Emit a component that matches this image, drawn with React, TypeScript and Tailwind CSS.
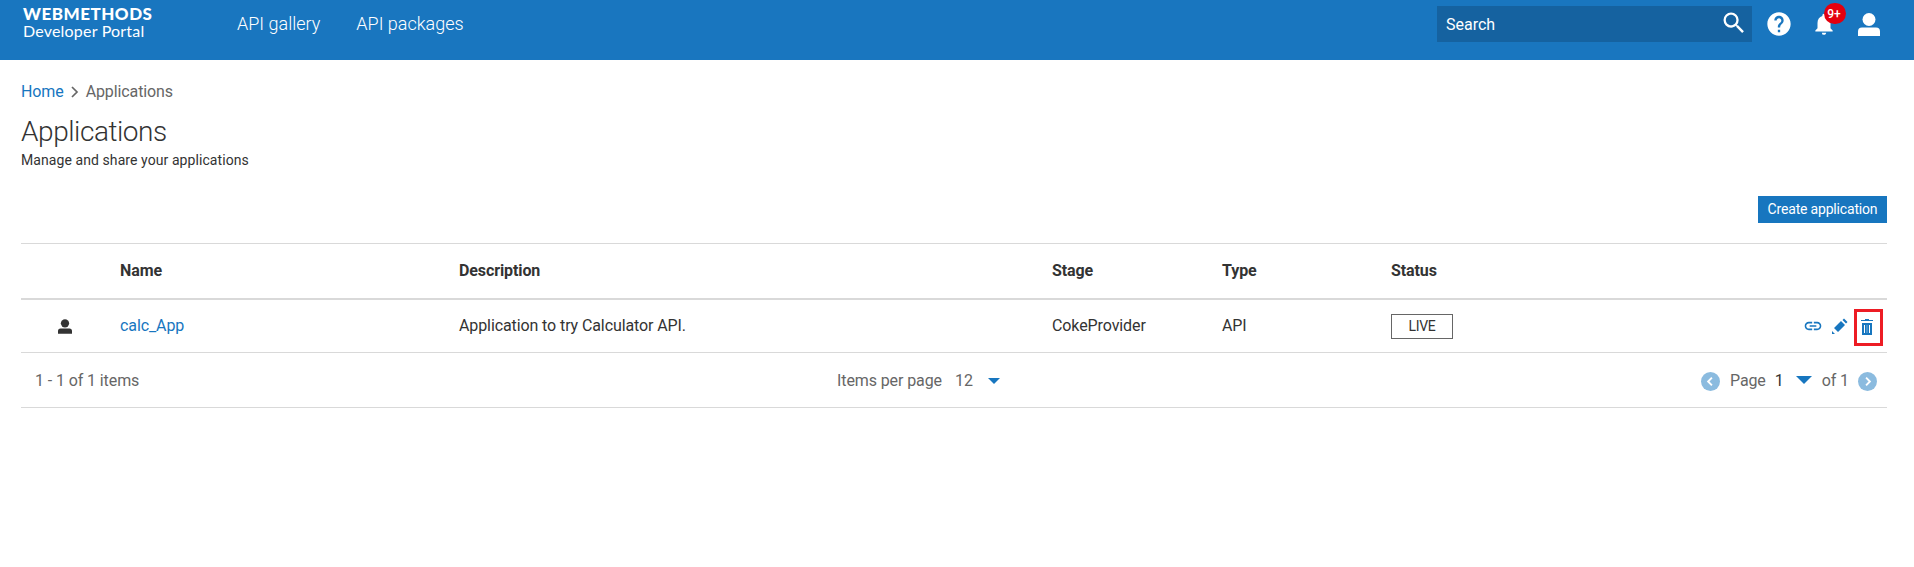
import React from "react";
import { MdSearch, MdHelp, MdNotifications, MdLink } from "react-icons/md";

function Person({ className }: { className: string }) {
  return (
    <svg viewBox="0 0 22 23" className={className} fill="currentColor">
      <circle cx="11" cy="6.5" r="6.5" />
      <path d="M0 23v-4.5a4 4 0 0 1 4-4h14a4 4 0 0 1 4 4V23z" />
    </svg>
  );
}

function Caret({ className }: { className: string }) {
  return (
    <svg viewBox="0 0 14 7" className={className} preserveAspectRatio="none" fill="#1776bf">
      <path d="M0 0h14l-7 7z" />
    </svg>
  );
}

function PageButton({ d }: { d: string }) {
  return (
    <svg viewBox="0 0 20 20" className="mt-px size-[19px]">
      <circle cx="10" cy="10" r="10" fill="#8bbbdf" />
      <path d={d} fill="none" stroke="#fff" strokeWidth="2" />
    </svg>
  );
}

const columns = "grid grid-cols-[99px_339px_593px_170px_169px_1fr]";

export default function App() {
  return (
    <div className="h-[567px] w-full overflow-hidden bg-white font-['Roboto',sans-serif] text-base text-[#333]">
      <header className="flex h-[60px] items-start bg-[#1976bf] text-white">
        <div className="ml-[23px] w-[214px] pt-[5px] font-['Lato',sans-serif] whitespace-nowrap">
          <div className="text-[17px] leading-[18px] font-black tracking-[0.5px]">WEBMETHODS</div>
          <div className="text-[16px] leading-[15px] tracking-[0.2px]">Developer Portal</div>
        </div>
        <nav className="flex gap-9 pt-3 text-[18px] leading-6 font-light">
          <a>API gallery</a>
          <a>API packages</a>
        </nav>
        <div className="mt-1.5 ml-auto flex h-9 w-[315px] items-center justify-between bg-[#1562a0] pr-1 pl-[9px]">
          <span className="pt-0.5">Search</span>
          <MdSearch className="-mt-[3px] size-7" />
        </div>
        <MdHelp className="mt-[10px] ml-[13px] size-7" />
        <div className="relative mt-[11px] ml-[18px]">
          <MdNotifications className="size-[26px]" />
          <span className="absolute -top-2 left-[13px] flex h-[21px] w-[22px] items-center justify-center rounded-full bg-[#e3000f] pr-0.5 text-xs font-medium">9+</span>
        </div>
        <Person className="mt-[13px] mr-[34px] ml-[21px] h-[23px] w-[22px]" />
      </header>

      <main className="pr-[27px] pl-[21px]">
        <div className="mt-5 flex h-6 items-center text-[#666]">
          <a className="text-[#1776bf] tracking-[-0.1px]">Home</a>
          <svg viewBox="0 0 8 12" className="mr-[7px] ml-[7px] h-3 w-2" fill="none" stroke="#666" strokeWidth="1.7">
            <path d="M1 1l5 5-5 5" />
          </svg>
          <span className="tracking-[-0.11px]">Applications</span>
        </div>
        <h1 className="mt-3 text-[28px] leading-8 font-light tracking-[-0.45px]">Applications</h1>
        <p className="mt-0.5 text-sm leading-5 tracking-[0.08px]">Manage and share your applications</p>
        <div className="mt-[26px] flex justify-end">
          <button className="h-[27px] w-[129px] bg-[#1776bf] pb-0.5 text-sm tracking-[-0.18px] text-white">Create application</button>
        </div>

        <section className="mt-5 border-y border-[#d9d9d9]">
          <div className={`${columns} h-14 items-center border-b-2 border-[#d9d9d9] font-bold tracking-[-0.1px]`}>
            <span />
            <span>Name</span>
            <span>Description</span>
            <span>Stage</span>
            <span>Type</span>
            <span>Status</span>
          </div>
          <div className={`${columns} h-[53px] items-center border-b border-[#d9d9d9] tracking-[-0.1px]`}>
            <Person className="ml-[37px] h-[15px] w-[14px]" />
            <a className="text-[#1776bf]">calc_App</a>
            <span>Application to try Calculator API.</span>
            <span>CokeProvider</span>
            <span>API</span>
            <div className="flex items-center justify-between pr-1">
              <span className="flex h-[25px] w-[62px] items-center justify-center border border-[#666] text-sm tracking-[-0.3px]">LIVE</span>
              <div className="flex items-center text-[#1776bf]">
                <MdLink className="mr-[9px] size-5" />
                <svg viewBox="0 0 16 16" className="mr-[6px] size-4" fill="currentColor">
                  <path d="M0 13l3 3H0zM2 10l7-7 4 4-7 7zM10.5 2L12 .5 15.5 4 14 5.5z" />
                </svg>
                <div className="mt-[2px] flex h-[37px] w-[29px] items-center justify-center border-3 border-[#ed1c24] pr-[3px]">
                  <svg viewBox="0 0 12 16" className="h-4 w-3" fill="currentColor">
                    <path fillRule="evenodd" d="M0 1h4V0h4v1h4v1H0zM1 4h10v12H1zM3 6v8h1V6zM8 6v8h1V6z" />
                    <path d="M5.8 6h.4v8h-.4z" fill="#fff" />
                  </svg>
                </div>
              </div>
            </div>
          </div>
          <div className="grid h-[54px] grid-cols-[802px_1fr_auto] items-center text-[#666]">
            <span className="pt-px pl-[14px] tracking-[-0.1px]">1 - 1 of 1 items</span>
            <div className="flex items-center pt-px">
              <span className="pl-[14px] tracking-[-0.1px]">Items per page</span>
              <span className="ml-[13px] pt-px">12</span>
              <Caret className="mt-px ml-[15px] h-[6px] w-3" />
            </div>
            <div className="flex items-center pt-0.5 pr-[10px]">
              <PageButton d="M11.5 6L7.5 10l4 4" />
              <span className="ml-[10px] tracking-[-0.1px]">Page</span>
              <span className="ml-[9px] text-[#333]">1</span>
              <Caret className="-mt-0.5 ml-3 h-2 w-4" />
              <span className="mr-[9px] ml-[10px] tracking-[-0.1px]">of 1</span>
              <PageButton d="M8.5 6l4 4-4 4" />
            </div>
          </div>
        </section>
      </main>
    </div>
  );
}
